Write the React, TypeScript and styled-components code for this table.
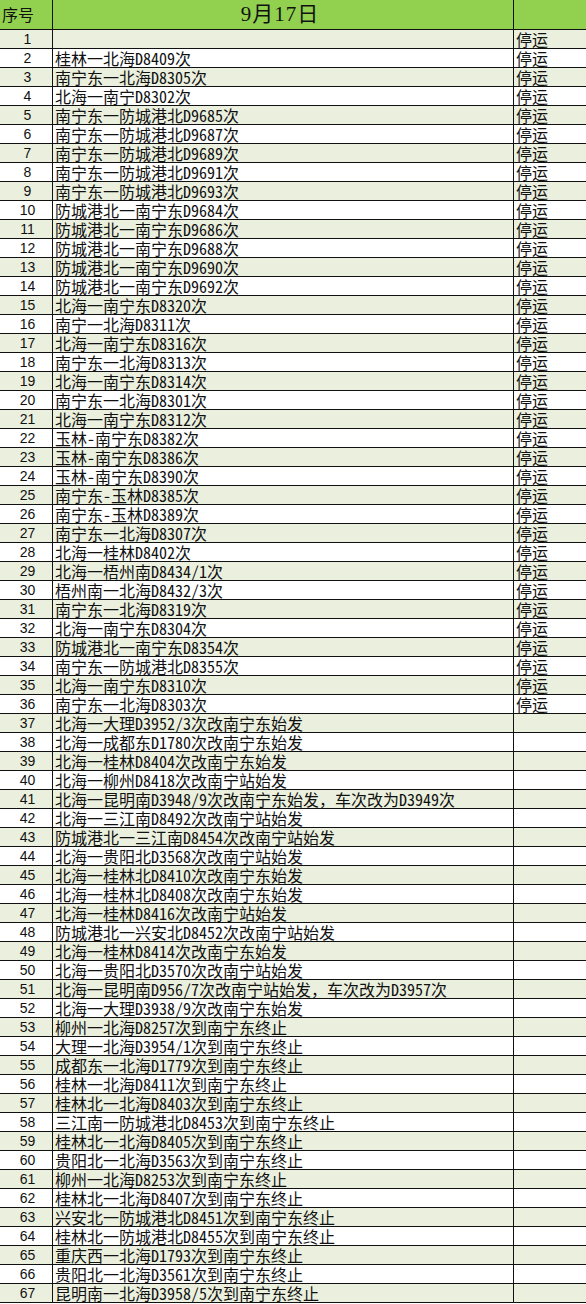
import styled, { createGlobalStyle } from 'styled-components';

const GlobalStyle = createGlobalStyle`
    html, body {
        margin : 0;
        padding : 0;
        background-color : #ffffff;
    }
    * {
        box-sizing : border-box;
    }
`;

const Sheet = styled.div`
    width : 586px;
    display : flex;
    flex-direction : column;
    font-family : "Noto Sans CJK SC", sans-serif;
    color : #111;
`;

const HeaderRow = styled.div`
    display : grid;
    grid-template-columns : 53px 461px 1fr;
    height : 30px;
    background-color : #92d050;
    border-bottom : 1px solid #111;
`;

const Row = styled.div<{ $shaded: boolean }>`
    display : grid;
    grid-template-columns : 53px 461px 1fr;
    height : 19px;
    background-color : ${({ $shaded }) => ($shaded ? '#ebf0de' : '#ffffff')};
    border-bottom : 1px solid #111;
`;

const HeadCell = styled.div<{ $center?: boolean; $divider?: boolean }>`
    display : flex;
    align-items : center;
    justify-content : ${({ $center }) => ($center ? 'center' : 'flex-start')};
    padding-left : ${({ $center }) => ($center ? '0' : '2px')};
    border-right : ${({ $divider }) => ($divider ? '1px solid #111' : 'none')};
    font-size : 16px;
    line-height : 20px;
    padding-bottom : 1px;
`;

const DateTitle = styled.span`
    font-family : "Liberation Serif", "Noto Sans CJK SC", serif;
    font-size : 21px;
    line-height : 24px;
    letter-spacing : 1px;
    margin-left : -6px;
`;

const NumCell = styled.div`
    display : flex;
    align-items : center;
    justify-content : center;
    border-right : 1px solid #111;
    font-family : "Liberation Sans", sans-serif;
    font-size : 14px;
    line-height : 16px;
    padding-left : 3px;
`;

const TextCell = styled.div<{ $divider?: boolean }>`
    display : flex;
    align-items : center;
    padding-left : 2px;
    border-right : ${({ $divider }) => ($divider ? '1px solid #111' : 'none')};
    font-size : 16px;
    line-height : 18px;
    white-space : nowrap;
    font-feature-settings : "hwid";
`;

const FullWidth = styled.span`
    font-feature-settings : normal;
`;

const trains: string[] = [
    '',
    '桂林一北海D8409次',
    '南宁东一北海D8305次',
    '北海一南宁D8302次',
    '南宁东一防城港北D9685次',
    '南宁东一防城港北D9687次',
    '南宁东一防城港北D9689次',
    '南宁东一防城港北D9691次',
    '南宁东一防城港北D9693次',
    '防城港北一南宁东D9684次',
    '防城港北一南宁东D9686次',
    '防城港北一南宁东D9688次',
    '防城港北一南宁东D9690次',
    '防城港北一南宁东D9692次',
    '北海一南宁东D8320次',
    '南宁一北海D8311次',
    '北海一南宁东D8316次',
    '南宁东一北海D8313次',
    '北海一南宁东D8314次',
    '南宁东一北海D8301次',
    '北海一南宁东D8312次',
    '玉林-南宁东D8382次',
    '玉林-南宁东D8386次',
    '玉林-南宁东D8390次',
    '南宁东-玉林D8385次',
    '南宁东-玉林D8389次',
    '南宁东一北海D8307次',
    '北海一桂林D8402次',
    '北海一梧州南D8434/1次',
    '梧州南一北海D8432/3次',
    '南宁东一北海D8319次',
    '北海一南宁东D8304次',
    '防城港北一南宁东D8354次',
    '南宁东一防城港北D8355次',
    '北海一南宁东D8310次',
    '南宁东一北海D8303次',
    '北海一大理D3952/3次改南宁东始发',
    '北海一成都东D1780次改南宁东始发',
    '北海一桂林D8404次改南宁东始发',
    '北海一柳州D8418次改南宁站始发',
    '北海一昆明南D3948/9次改南宁东始发，车次改为D3949次',
    '北海一三江南D8492次改南宁站始发',
    '防城港北一三江南D8454次改南宁站始发',
    '北海一贵阳北D3568次改南宁站始发',
    '北海一桂林北D8410次改南宁东始发',
    '北海一桂林北D8408次改南宁东始发',
    '北海一桂林D8416次改南宁站始发',
    '防城港北一兴安北D8452次改南宁站始发',
    '北海一桂林D8414次改南宁东始发',
    '北海一贵阳北D3570次改南宁站始发',
    '北海一昆明南D956/7次改南宁站始发，车次改为D3957次',
    '北海一大理D3938/9次改南宁东始发',
    '柳州一北海D8257次到南宁东终止',
    '大理一北海D3954/1次到南宁东终止',
    '成都东一北海D1779次到南宁东终止',
    '桂林一北海D8411次到南宁东终止',
    '桂林北一北海D8403次到南宁东终止',
    '三江南一防城港北D8453次到南宁东终止',
    '桂林北一北海D8405次到南宁东终止',
    '贵阳北一北海D3563次到南宁东终止',
    '柳州一北海D8253次到南宁东终止',
    '桂林北一北海D8407次到南宁东终止',
    '兴安北一防城港北D8451次到南宁东终止',
    '桂林北一防城港北D8455次到南宁东终止',
    '重庆西一北海D1793次到南宁东终止',
    '贵阳北一北海D3561次到南宁东终止',
    '昆明南一北海D3958/5次到南宁东终止',
];

// keep the full-width comma wide while latin digits stay half-width
const renderName = (name: string) =>
    name.split('，').map((part, j) => (
        <span key={j}>
            {j > 0 && <FullWidth>，</FullWidth>}
            {part}
        </span>
    ));

const App = () => {
    return (
        <>
            <GlobalStyle />
            <Sheet>
                <HeaderRow>
                    <HeadCell $divider>序号</HeadCell>
                    <HeadCell $center $divider>
                        <DateTitle>9月17日</DateTitle>
                    </HeadCell>
                    <HeadCell />
                </HeaderRow>
                {trains.map((name, i) => (
                    <Row key={i} $shaded={i % 2 === 0}>
                        <NumCell>{i + 1}</NumCell>
                        <TextCell $divider>{renderName(name)}</TextCell>
                        <TextCell>{i < 36 ? '停运' : ''}</TextCell>
                    </Row>
                ))}
            </Sheet>
        </>
    );
};

export default App;
